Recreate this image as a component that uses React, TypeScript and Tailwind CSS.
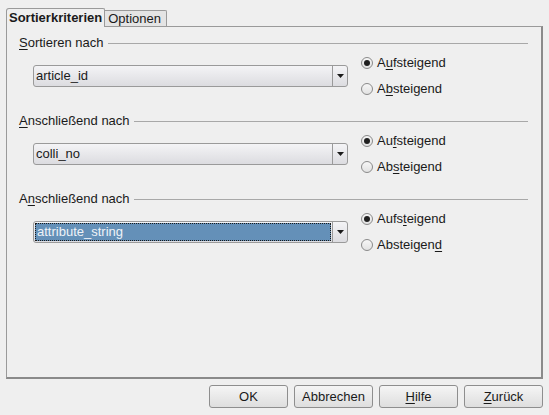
import React from "react";

type Sort = {
  label: React.ReactNode;
  value: string;
  up: React.ReactNode;
  down: React.ReactNode;
  focused?: boolean;
};

const u = (c: string) => <span className="underline underline-offset-2">{c}</span>;

const sorts: Sort[] = [
  {
    label: <>{u("S")}ortieren nach</>,
    value: "article_id",
    up: <>A{u("u")}fsteigend</>,
    down: <>A{u("b")}steigend</>,
  },
  {
    label: <>{u("A")}nschließend nach</>,
    value: "colli_no",
    up: <>Au{u("f")}steigend</>,
    down: <>Ab{u("s")}teigend</>,
  },
  {
    label: <>A{u("n")}schließend nach</>,
    value: "attribute_string",
    up: <>Aufs{u("t")}eigend</>,
    down: <>Absteigen{u("d")}</>,
    focused: true,
  },
];

function Radio({ checked, children }: { checked?: boolean; children: React.ReactNode }) {
  return (
    <div className="flex h-4 items-center gap-[4px]">
      <span className="flex h-[12px] w-[12px] items-center justify-center rounded-full border border-[#8a8a8a] bg-gradient-to-b from-[#f6f6f6] to-[#e2e2e2]">
        {checked && <span className="h-[6px] w-[6px] rounded-full bg-[#202020]" />}
      </span>
      <span>{children}</span>
    </div>
  );
}

function Combo({ value, focused }: { value: string; focused?: boolean }) {
  return (
    <div className="flex h-[22px] w-[315px] rounded-[3px] border border-[#9a9a9a] bg-gradient-to-b from-[#f4f4f6] to-[#dcdce0]">
      <div className="flex flex-1 items-center p-[1px]">
        {focused ? (
          <div className="flex h-full w-full items-center border border-dotted border-[#1a1a1a] bg-[#6490b8] pl-[1px] text-[#eef2f7]">
            {value}
          </div>
        ) : (
          <span className="pl-[1px]">{value}</span>
        )}
      </div>
      <div className="flex w-[15px] items-center justify-center border-l border-[#9a9a9a]">
        <svg width="7" height="4" viewBox="0 0 7 4">
          <path d="M0 0h7L3.5 4z" fill="#1a1a1a" />
        </svg>
      </div>
    </div>
  );
}

function Button({ children }: { children: React.ReactNode }) {
  return (
    <button className="flex h-[23px] w-[79px] items-center justify-center rounded-[3px] border border-[#8e8e8e] bg-gradient-to-b from-[#f5f5f5] to-[#dedede] text-[#1a1a1a]">
      {children}
    </button>
  );
}

export default function App() {
  return (
    <div
      className="flex h-[415px] w-[549px] flex-col bg-[#efefef] text-[13px] leading-4 text-[#1a1a1a]"
      style={{ fontFamily: '"Liberation Sans", Arial, sans-serif' }}
    >
      <div className="flex items-end pl-[6px] pt-[8px]">
        <div className="relative z-10 -mb-px flex h-[19px] items-center rounded-tl-[3px] rounded-tr-[2px] border border-b-0 border-[#9a9a9a] bg-[#efefef] px-[2px] font-bold">
          Sortierkriterien
        </div>
        <div className="flex h-[16px] items-center rounded-tr-[2px] border border-b-0 border-l-0 border-[#9a9a9a] bg-[#e4e4e4] pl-[3px] pr-[5px]">
          Optionen
        </div>
      </div>

      <div className="mx-[6px] flex h-[353px] flex-col gap-[16px] border border-[#9a9a9a] border-b-2 border-r-2 border-b-[#8a8a8a] border-r-[#8a8a8a] px-[12px] pr-[13px] pt-[8px]">
        {sorts.map((s, i) => (
          <div key={i} className="flex flex-col">
            <div className="flex h-4 items-center gap-[4px]">
              <span>{s.label}</span>
              <div className="h-px flex-1 bg-[#a8a8a8]" />
            </div>
            <div className="ml-[14px] mt-[4px] flex items-center gap-[13px]">
              <Combo value={s.value} focused={s.focused} />
              <div className="flex flex-col gap-[10px]">
                <Radio checked>{s.up}</Radio>
                <Radio>{s.down}</Radio>
              </div>
            </div>
          </div>
        ))}
      </div>

      <div className="mt-[6px] flex justify-end gap-[6px] pr-[6px]">
        <Button>OK</Button>
        <Button>Abbrechen</Button>
        <Button>
          <span className="underline underline-offset-2">H</span>ilfe
        </Button>
        <Button>
          <span className="underline underline-offset-2">Z</span>urück
        </Button>
      </div>
    </div>
  );
}
